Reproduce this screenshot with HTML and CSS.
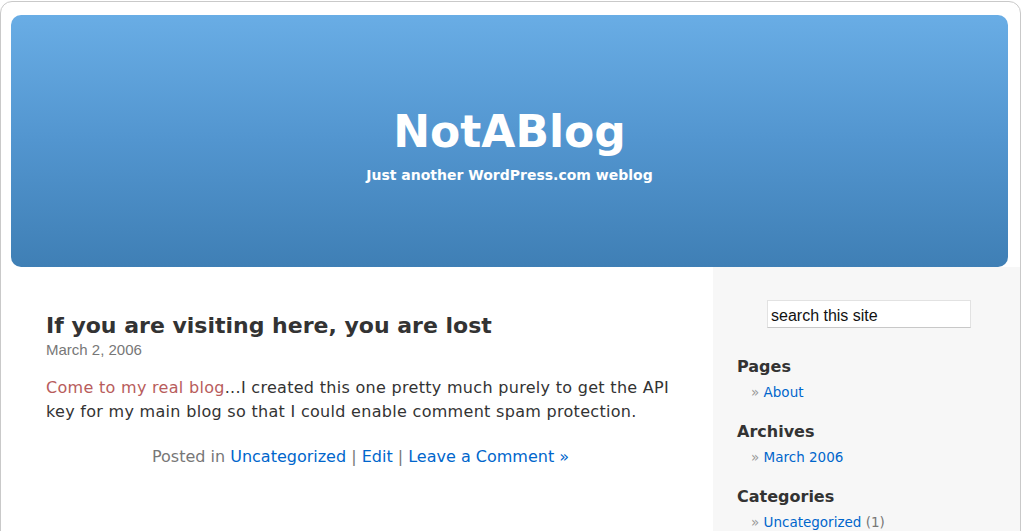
FILE: index.html
```html
<!DOCTYPE html>
<html lang="en">
<head>
<meta charset="utf-8">
<title>NotABlog</title>
<link rel="stylesheet" href="styles.css">
</head>
<body>
<div class="page">
  <header class="header">
    <h1 class="site-title">NotABlog</h1>
    <div class="site-desc">Just another WordPress.com weblog</div>
  </header>
  <div class="columns">
    <main class="content">
      <article class="post">
        <h2 class="post-title">If you are visiting here, you are lost</h2>
        <div class="post-date">March 2, 2006</div>
        <p class="post-body"><a class="visited" href="#">Come to my real blog</a>...I created this one pretty much purely to get the API key for my main blog so that I could enable comment spam protection.</p>
        <p class="post-meta">Posted in <a href="#">Uncategorized</a> | <a href="#">Edit</a> | <a href="#">Leave a Comment »</a></p>
      </article>
    </main>
    <aside class="sidebar">
      <div class="search"><input class="search-input" type="text" value="search this site"></div>
      <section class="widget">
        <h3 class="widget-title">Pages</h3>
        <ul class="widget-list"><li><span class="raquo">»</span> <a href="#">About</a></li></ul>
      </section>
      <section class="widget">
        <h3 class="widget-title">Archives</h3>
        <ul class="widget-list"><li><span class="raquo">»</span> <a href="#">March 2006</a></li></ul>
      </section>
      <section class="widget">
        <h3 class="widget-title">Categories</h3>
        <ul class="widget-list"><li><span class="raquo">»</span> <a href="#">Uncategorized</a> <span class="count">(1)</span></li></ul>
      </section>
    </aside>
  </div>
</div>
</body>
</html>
```
FILE: styles.css
```css
html, body {
  margin: 0;
  padding: 0;
  background: #ffffff;
  font-family: "DejaVu Sans", "Noto Sans", sans-serif;
  color: #333333;
}

a {
  color: #0066cc;
  text-decoration: none;
}

.page {
  margin: 1px 0 0 0;
  width: 1019px;
  border: 1px solid #c9c9c9;
  border-radius: 12px 12px 0 0;
  background: #ffffff;
  min-height: 560px;
  overflow: hidden;
}

.header {
  margin: 13px 12px 0 10px;
  height: 252px;
  border-radius: 10px;
  background: linear-gradient(to bottom, #69ade5 0%, #5295cf 50%, #3f7fb5 100%);
  color: #ffffff;
  display: flex;
  flex-direction: column;
  align-items: center;
  justify-content: center;
  padding-top: 6px;
  box-sizing: border-box;
}

.site-title {
  margin: 0;
  font-size: 44px;
  font-weight: bold;
  line-height: 56px;
}

.site-desc {
  font-size: 14px;
  font-weight: bold;
  line-height: 20px;
  margin-top: 5px;
}

.columns {
  display: grid;
  grid-template-columns: 712px 1fr;
}

.content {
  padding: 43px 38px 0 45px;
}

.post-title {
  margin: 0;
  font-size: 22px;
  font-weight: bold;
  line-height: 32px;
  color: #333333;
}

.post-date {
  font-family: "Liberation Sans", Arial, sans-serif;
  font-size: 15px;
  color: #777777;
  line-height: 16px;
}

.post-body {
  margin: 18px 0 0 0;
  font-size: 16px;
  letter-spacing: 0.3px;
  line-height: 24px;
  color: #333333;
}

.post-body .visited {
  color: #b85c5c;
}

.post-meta {
  margin: 21px 0 0 0;
  text-align: center;
  font-size: 16px;
  line-height: 24px;
  color: #777777;
}

.sidebar {
  background: #f7f7f7;
  padding: 33px 24px 0 24px;
  min-height: 300px;
}

.search {
  padding-left: 30px;
}

.search-input {
  width: 204px;
  height: 28px;
  box-sizing: border-box;
  border: 1px solid #e2e2e2;
  border-bottom-color: #c8c8c8;
  background: #ffffff;
  font-family: "Liberation Sans", Arial, sans-serif;
  font-size: 16px;
  color: #111111;
  padding: 4px 3px 0 3px;
  margin: 0;
  outline: none;
}

.widget {
  margin-top: 27px;
}

.widget + .widget {
  margin-top: 16px;
}

.widget-title {
  margin: 0;
  font-size: 16px;
  font-weight: bold;
  line-height: 24px;
  color: #333333;
}

.widget-list {
  list-style: none;
  margin: 1px 0 0 0;
  padding: 0 0 0 14px;
  font-size: 13.5px;
  line-height: 24px;
}

.raquo {
  color: #999999;
}

.count {
  color: #777777;
}
```
